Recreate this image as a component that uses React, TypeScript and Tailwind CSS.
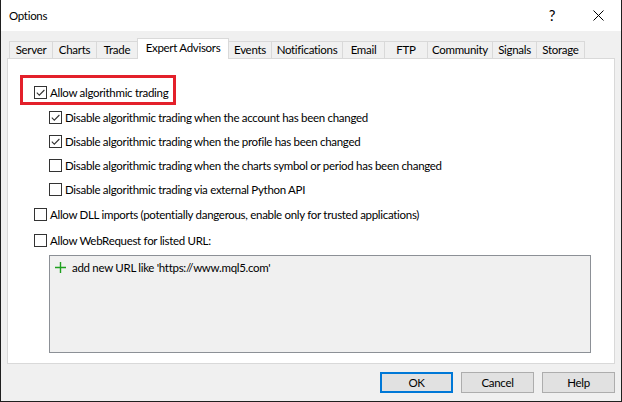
import React from "react";

function Check({ checked }: { checked?: boolean }) {
  return (
    <span className="w-[13px] h-[13px] border border-[#333333] bg-white shrink-0 flex items-center justify-center">
      {checked && (
        <svg width="11" height="11" viewBox="0 0 11 11">
          <path d="M1.8 5.6 L4.3 8.1 L9.4 3" fill="none" stroke="#333333" strokeWidth="1.1" />
        </svg>
      )}
    </span>
  );
}

function Row({ checked, label, className }: { checked?: boolean; label: string; className?: string }) {
  return (
    <div className={"flex items-center h-[13px] gap-[3px] " + (className ?? "")}>
      <Check checked={checked} />
      <span className="leading-[16px] whitespace-nowrap text-black">{label}</span>
    </div>
  );
}

const tabs: { label: string; cls: string; sel?: boolean }[] = [
  { label: "Server", cls: "w-[43px] border-l" },
  { label: "Charts", cls: "w-[44px] border-l" },
  { label: "Trade", cls: "w-[41px] border-l" },
  { label: "Expert Advisors", cls: "w-[92px]", sel: true },
  { label: "Events", cls: "w-[42px]" },
  { label: "Notifications", cls: "w-[71px] border-l" },
  { label: "Email", cls: "w-[42px] border-l" },
  { label: "FTP", cls: "w-[43px] border-l" },
  { label: "Community", cls: "w-[65px] border-l" },
  { label: "Signals", cls: "w-[44px] border-l" },
  { label: "Storage", cls: "w-[49px] border-l border-r" },
];

export default function App() {
  return (
    <div className="w-[622px] h-[402px] bg-[#f0f0f0] border-l border-r border-b border-[#1f1f1f] flex flex-col font-['Lato',sans-serif] text-[11.5px] tracking-[-0.3px] text-black overflow-hidden">
      <div className="h-[31px] shrink-0 bg-white flex items-center justify-between">
        <span className="pl-[8px] leading-[16px]">Options</span>
        <div className="flex h-full">
          <div className="w-[46px] h-full flex items-center justify-center text-[15px] leading-none">?</div>
          <div className="w-[46px] h-full flex items-center justify-center">
            <svg width="11" height="11" viewBox="0 0 11 11">
              <path d="M0.5 0.5 L10.5 10.5 M10.5 0.5 L0.5 10.5" stroke="#000" strokeWidth="1" />
            </svg>
          </div>
        </div>
      </div>

      <div className="px-[6px] pt-[7px] flex flex-col">
        <div className="h-[20px] flex items-end pl-[2px]">
          {tabs.map((t) =>
            t.sel ? (
              <div
                key={t.label}
                className={t.cls + " h-[21px] -mb-px relative z-10 bg-white border-t border-l border-r border-[#d9d9d9] flex justify-center pt-px leading-[16px] whitespace-nowrap"}
              >
                {t.label}
              </div>
            ) : (
              <div
                key={t.label}
                className={t.cls + " h-[17px] border-t border-[#d9d9d9] bg-[#f0f0f0] flex justify-center leading-[16px] whitespace-nowrap"}
              >
                {t.label}
              </div>
            )
          )}
        </div>

        <div className="h-[306px] border border-[#d9d9d9] bg-white flex flex-col pl-[12px] pt-[16px]">
          <div className="self-start border-[3px] border-[#e3202a] pl-[11px] pr-[5px] pt-[8px] pb-[3px]">
            <Row checked label="Allow algorithmic trading" />
          </div>
          <Row checked className="ml-[29px] mt-[6px]" label="Disable algorithmic trading when the account has been changed" />
          <Row checked className="ml-[29px] mt-[11px]" label="Disable algorithmic trading when the profile has been changed" />
          <Row className="ml-[29px] mt-[11px]" label="Disable algorithmic trading when the charts symbol or period has been changed" />
          <Row className="ml-[29px] mt-[11px]" label="Disable algorithmic trading via external Python API" />
          <Row className="ml-[14px] mt-[12px]" label="Allow DLL imports (potentially dangerous, enable only for trusted applications)" />
          <Row className="ml-[14px] mt-[13px]" label="Allow WebRequest for listed URL:" />
          <div className="ml-[29px] mt-[8px] w-[542px] h-[98px] border border-[#8c9096] bg-[#f0f0f0] pl-[5px] pt-[5px]">
            <div className="flex items-center h-[13px] gap-[6px]">
              <svg width="11" height="11" viewBox="0 0 11 11" className="shrink-0">
                <path d="M5.5 0 V11 M0 5.5 H11" stroke="#1fa01f" strokeWidth="1.4" />
              </svg>
              <span className="leading-[16px] whitespace-nowrap">add new URL like 'https://www.mql5.com'</span>
            </div>
          </div>
        </div>
      </div>

      <div className="flex justify-end gap-[8px] pt-[8px] pr-[6px]">
        <button className="w-[73px] h-[21px] border-2 border-[#0078d7] bg-[#e1e1e1] flex items-center justify-center leading-[16px]">OK</button>
        <button className="w-[73px] h-[21px] border border-[#adadad] bg-[#e1e1e1] flex items-center justify-center leading-[16px]">Cancel</button>
        <button className="w-[73px] h-[21px] border border-[#adadad] bg-[#e1e1e1] flex items-center justify-center leading-[16px]">Help</button>
      </div>
    </div>
  );
}
